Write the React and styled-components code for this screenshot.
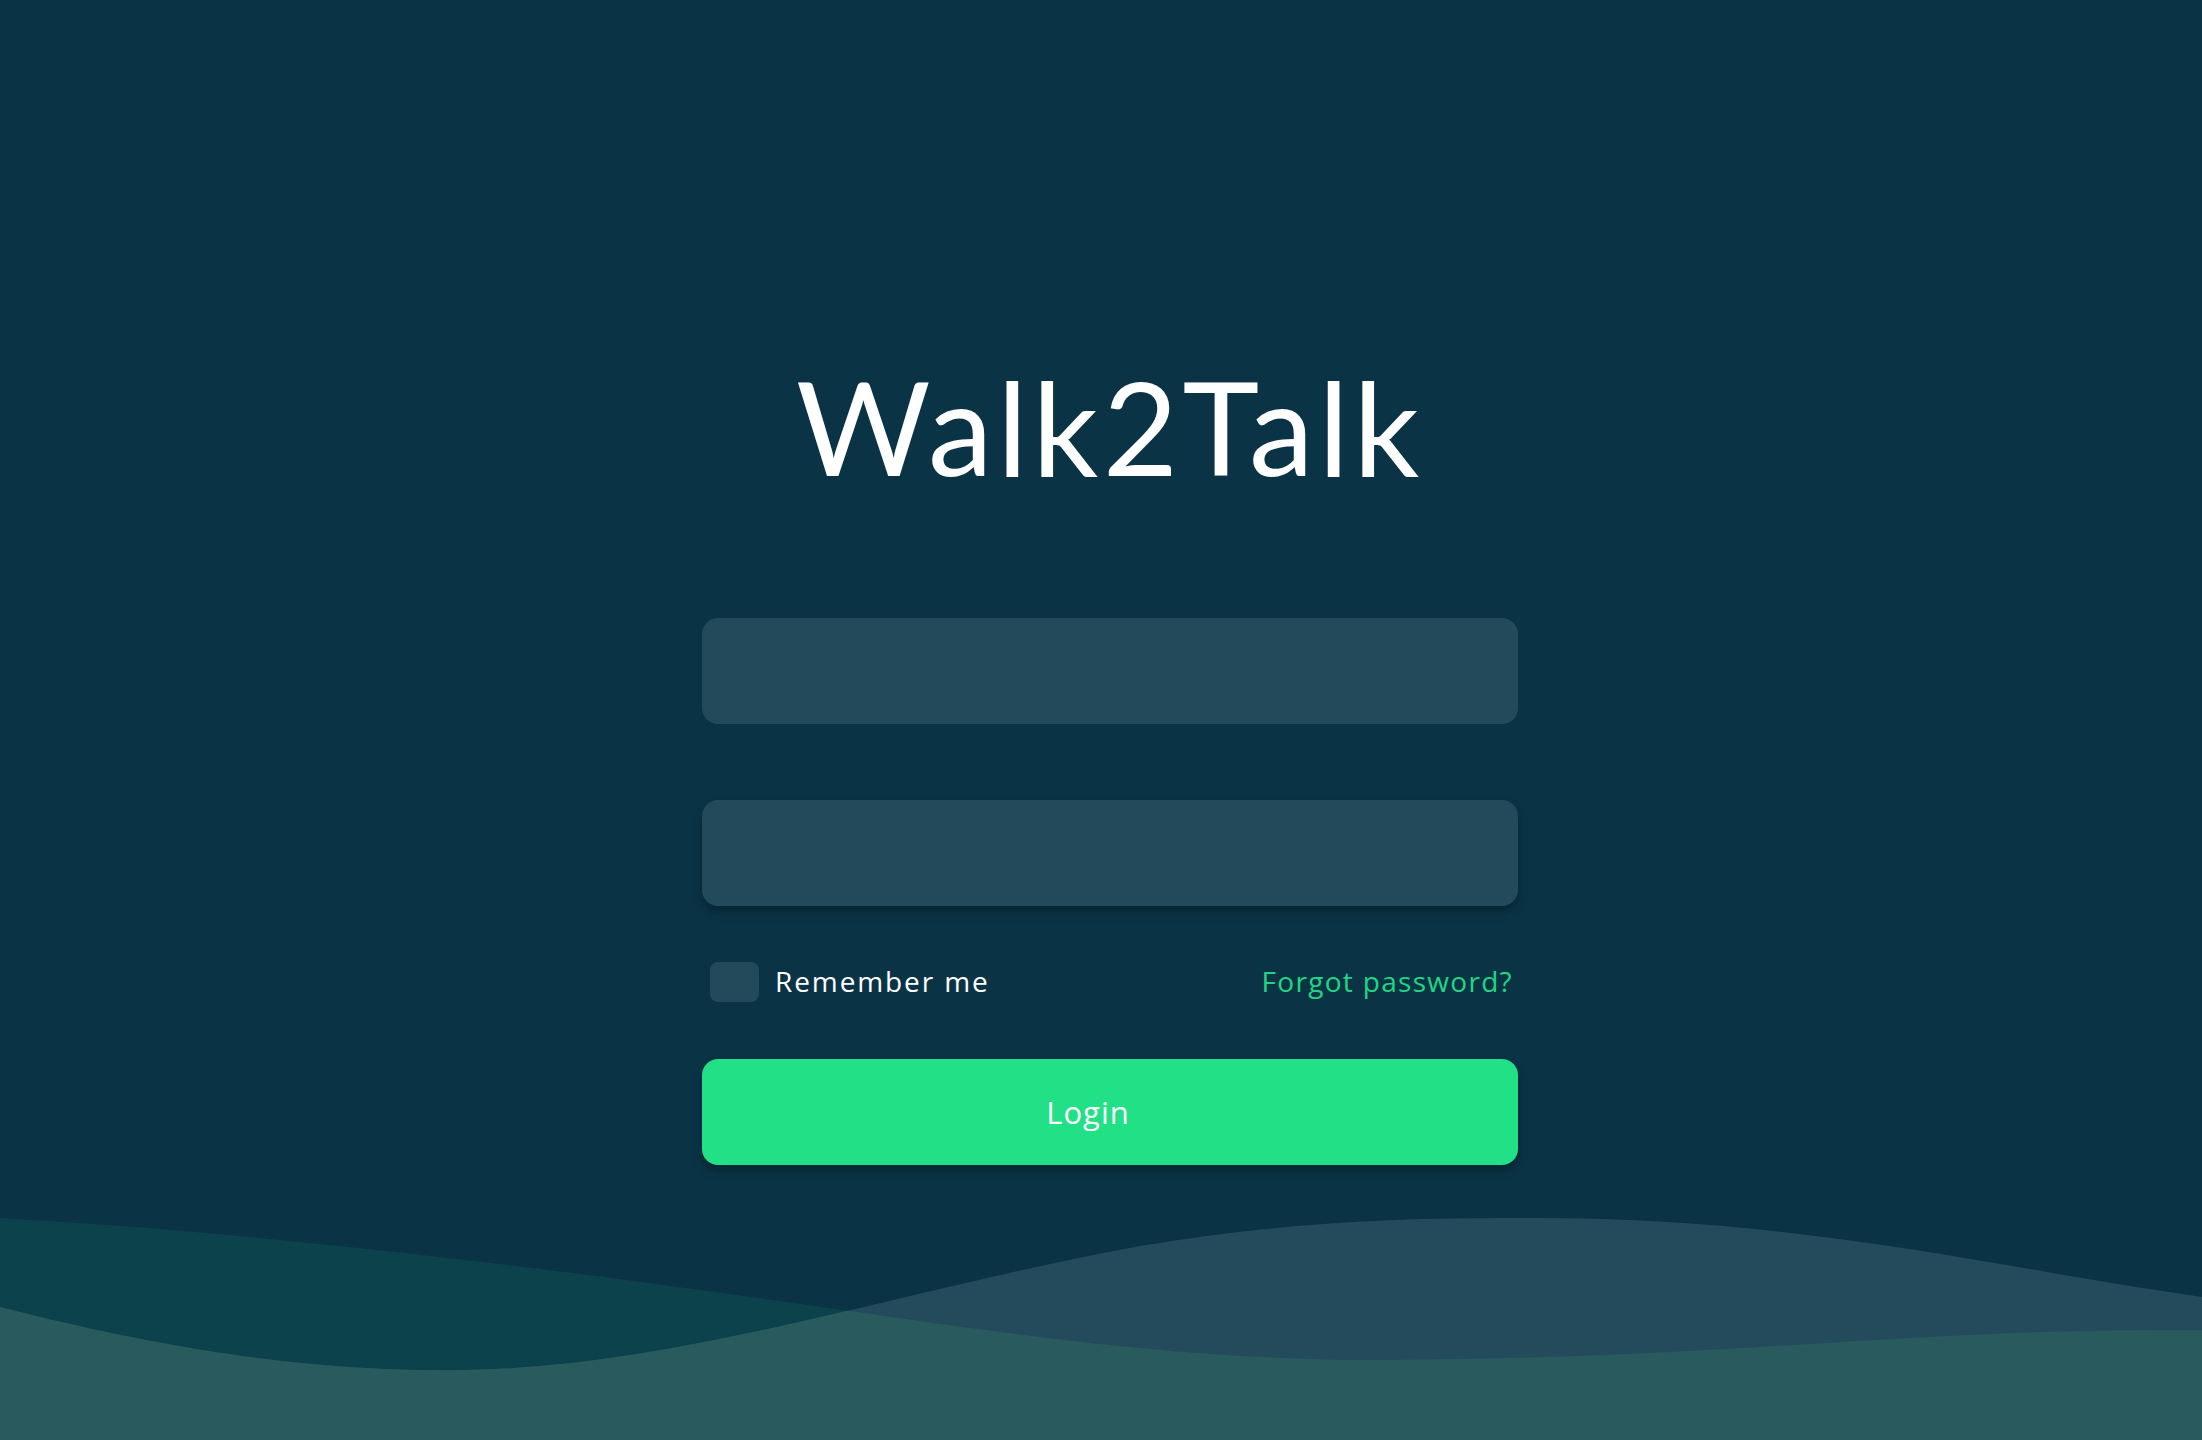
import React from 'react';
import styled, { createGlobalStyle } from 'styled-components';

const GlobalStyle = createGlobalStyle`
  html, body {
    margin: 0;
    padding: 0;
    background: #0a3446;
  }
  * {
    box-sizing: border-box;
  }
`;

const Page = styled.div`
  min-height: 100vh;
  display: flex;
  flex-direction: column;
  align-items: center;
  padding-top: 361px;
  padding-left: 18px;
  background: #0a3446;
  overflow: hidden;
`;

const Title = styled.h1`
  margin: 0;
  font-family: 'Lato', 'Noto Sans', sans-serif;
  font-weight: 400;
  font-size: 130px;
  line-height: 1;
  letter-spacing: 4.5px;
  color: #ffffff;
`;

const Form = styled.form`
  width: 816px;
  margin-top: 127px;
  display: flex;
  flex-direction: column;
`;

const Input = styled.input`
  display: block;
  width: 100%;
  height: 106px;
  margin-top: ${p => p.$offset || 0}px;
  padding: 0 32px;
  border: none;
  outline: none;
  border-radius: 16px;
  background: #224a5b;
  color: #ffffff;
  font-family: 'Open Sans', sans-serif;
  font-size: 28px;
  box-shadow: ${p => (p.$raised ? '0 6px 10px rgba(0, 0, 0, 0.28)' : 'none')};
`;

const OptionsRow = styled.div`
  height: 40px;
  margin-top: 56px;
  padding: 0 5px 0 8px;
  display: flex;
  align-items: center;
  justify-content: space-between;
`;

const RememberLabel = styled.label`
  display: flex;
  align-items: center;
  gap: 16px;
  font-family: 'Open Sans', sans-serif;
  font-size: 28px;
  line-height: 36px;
  letter-spacing: 1.9px;
  color: #ffffff;
  cursor: pointer;
  margin-top: -3px;
`;

const CheckBox = styled.span`
  width: 49px;
  height: 40px;
  border-radius: 8px;
  background: #224a5b;
  margin-top: 3px;
`;

const ForgotLink = styled.a`
  font-family: 'Open Sans', sans-serif;
  font-size: 28px;
  line-height: 36px;
  letter-spacing: 1.3px;
  color: #22d582;
  text-decoration: none;
  cursor: pointer;
  margin-top: -3px;
`;

const LoginButton = styled.button`
  height: 106px;
  margin-top: 57px;
  padding: 0 44px 0 0;
  border: none;
  border-radius: 16px;
  background: #21e085;
  color: #ffffff;
  font-family: 'Open Sans', sans-serif;
  font-size: 31px;
  letter-spacing: 1px;
  cursor: pointer;
  box-shadow: 0 6px 10px rgba(0, 0, 0, 0.28);
`;

const Waves = styled.svg`
  display: block;
  margin-top: auto;
  margin-left: -18px;
  width: 2202px;
  height: 223px;
  flex-shrink: 0;
`;

const backWave =
  'M0 1218 C300 1235 600 1275 843 1310 C1050 1340 1200 1360 1380 1360 C1750 1358 1900 1328 2202 1330 V1440 H0 Z';
const frontWave =
  'M0 1307 C200 1358 340 1372 465 1370 C680 1367 900 1290 1140 1246 C1310 1218 1430 1218 1540 1218 C1800 1218 2000 1268 2202 1297 V1440 H0 Z';

function WaveDecor() {
  return (
    <Waves viewBox="0 1217 2202 223" preserveAspectRatio="none">
      <defs>
        <clipPath id="back-clip">
          <path d={backWave} />
        </clipPath>
      </defs>
      <path d={backWave} fill="#0b424b" />
      <path d={frontWave} fill="#244b5c" />
      <path d={frontWave} fill="#285a5e" clipPath="url(#back-clip)" />
    </Waves>
  );
}

export default function App() {
  return (
    <>
      <GlobalStyle />
      <Page>
        <Title>Walk2Talk</Title>
        <Form onSubmit={e => e.preventDefault()}>
          <Input type="text" aria-label="Username" />
          <Input type="password" aria-label="Password" $offset={76} $raised />
          <OptionsRow>
            <RememberLabel>
              <CheckBox />
              Remember me
            </RememberLabel>
            <ForgotLink>Forgot password?</ForgotLink>
          </OptionsRow>
          <LoginButton type="submit">Login</LoginButton>
        </Form>
        <WaveDecor />
      </Page>
    </>
  );
}
